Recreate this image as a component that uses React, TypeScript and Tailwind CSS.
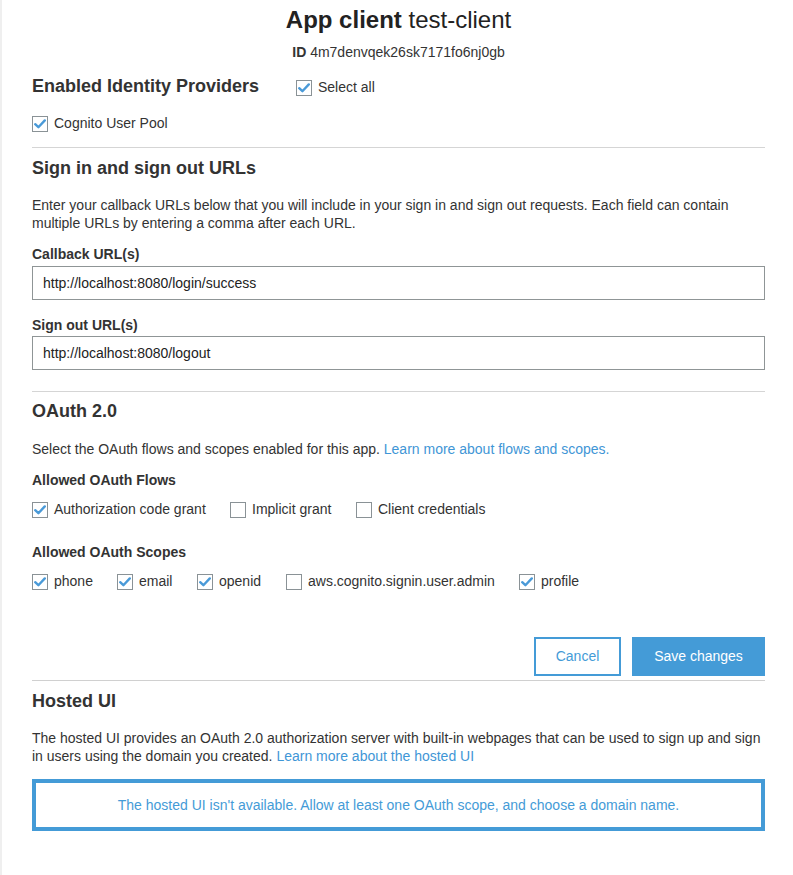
import React from "react";

function Check({ checked, label, className = "" }: { checked: boolean; label: string; className?: string }) {
  return (
    <label className={`flex items-center ${className}`}>
      <span className="w-[16px] h-[16px] border border-[#8a9296] bg-white flex items-center justify-center shrink-0">
        {checked && (
          <svg width="12" height="10" viewBox="0 0 12 10">
            <path d="M1.2 5.2 L4.4 8.2 L10.8 1.4" fill="none" stroke="#4a9ad8" strokeWidth="2.4" strokeLinecap="round" strokeLinejoin="round" />
          </svg>
        )}
      </span>
      <span className="ml-[6px] text-[14px] text-[#333]">{label}</span>
    </label>
  );
}

export default function App() {
  return (
    <div className="min-h-[875px] w-[793px] bg-white border-l-2 border-[#efefef]" style={{ fontFamily: '"Liberation Sans", Arial, sans-serif' }}>
      <div className="pl-[30px] pr-[28px] text-[#333]">
        <div className="text-center pt-[6px]">
          <h1 className="text-[24px] leading-[28px] text-[#222]">
            <span className="font-bold">App client</span> test-client
          </h1>
          <div className="text-[14px] mt-[10px] leading-[17px]">
            <span className="font-bold">ID</span> 4m7denvqek26sk7171fo6nj0gb
          </div>
        </div>

        <div className="flex items-center mt-[13px]">
          <h2 className="text-[18px] font-bold leading-[22px] w-[264px]">Enabled Identity Providers</h2>
          <Check checked label="Select all" className="mt-[3px]" />
        </div>
        <Check checked label="Cognito User Pool" className="mt-[15px]" />

        <div className="border-t border-[#d5d5d5] mt-[13px]" />

        <h2 className="text-[18px] font-bold leading-[22px] mt-[9px]">Sign in and sign out URLs</h2>
        <p className="text-[14px] leading-[18px] mt-[17px]">
          Enter your callback URLs below that you will include in your sign in and sign out requests. Each field can contain multiple URLs by entering a comma after each URL.
        </p>
        <div className="text-[14px] font-bold leading-[16px] mt-[14px]">Callback URL(s)</div>
        <div className="mt-[4px] h-[34px] border border-[#8f9596] flex items-center px-[10px] text-[14px] text-[#222]">
          http://localhost:8080/login/success
        </div>
        <div className="text-[14px] font-bold leading-[16px] mt-[17px]">Sign out URL(s)</div>
        <div className="mt-[3px] h-[34px] border border-[#8f9596] flex items-center px-[10px] text-[14px] text-[#222]">
          http://localhost:8080/logout
        </div>

        <div className="border-t border-[#d5d5d5] mt-[21px]" />

        <h2 className="text-[18px] font-bold leading-[22px] mt-[8px]">OAuth 2.0</h2>
        <p className="text-[14px] leading-[18px] mt-[18px]">
          Select the OAuth flows and scopes enabled for this app. <span className="text-[#3f96d6]">Learn more about flows and scopes.</span>
        </p>
        <div className="text-[14px] font-bold leading-[16px] mt-[14px]">Allowed OAuth Flows</div>
        <div className="flex items-center mt-[11px]">
          <Check checked label="Authorization code grant" className="w-[198px]" />
          <Check checked={false} label="Implicit grant" className="w-[126px]" />
          <Check checked={false} label="Client credentials" />
        </div>
        <div className="text-[14px] font-bold leading-[16px] mt-[24px]">Allowed OAuth Scopes</div>
        <div className="flex items-center mt-[11px]">
          <Check checked label="phone" className="w-[85px]" />
          <Check checked label="email" className="w-[80px]" />
          <Check checked label="openid" className="w-[89px]" />
          <Check checked={false} label="aws.cognito.signin.user.admin" className="w-[233px]" />
          <Check checked label="profile" />
        </div>

        <div className="flex justify-end gap-[11px] mt-[45px]">
          <button className="w-[87px] h-[39px] border-2 border-[#449bd7] text-[#449bd7] text-[14px] bg-white">Cancel</button>
          <button className="w-[133px] h-[39px] bg-[#449bd7] text-white text-[14px]">Save changes</button>
        </div>
        <div className="border-t border-[#d0d0d0] mt-[4px]" />

        <h2 className="text-[18px] font-bold leading-[22px] mt-[9px]">Hosted UI</h2>
        <p className="text-[14px] leading-[18px] mt-[17px]">
          The hosted UI provides an OAuth 2.0 authorization server with built-in webpages that can be used to sign up and sign in users using the domain you created. <span className="text-[#3f96d6]">Learn more about the hosted UI</span>
        </p>
        <div className="mt-[14px] h-[52px] border-4 border-[#449bd7] flex items-center justify-center text-[14px] text-[#449bd7]">
          The hosted UI isn't available. Allow at least one OAuth scope, and choose a domain name.
        </div>
      </div>
    </div>
  );
}
